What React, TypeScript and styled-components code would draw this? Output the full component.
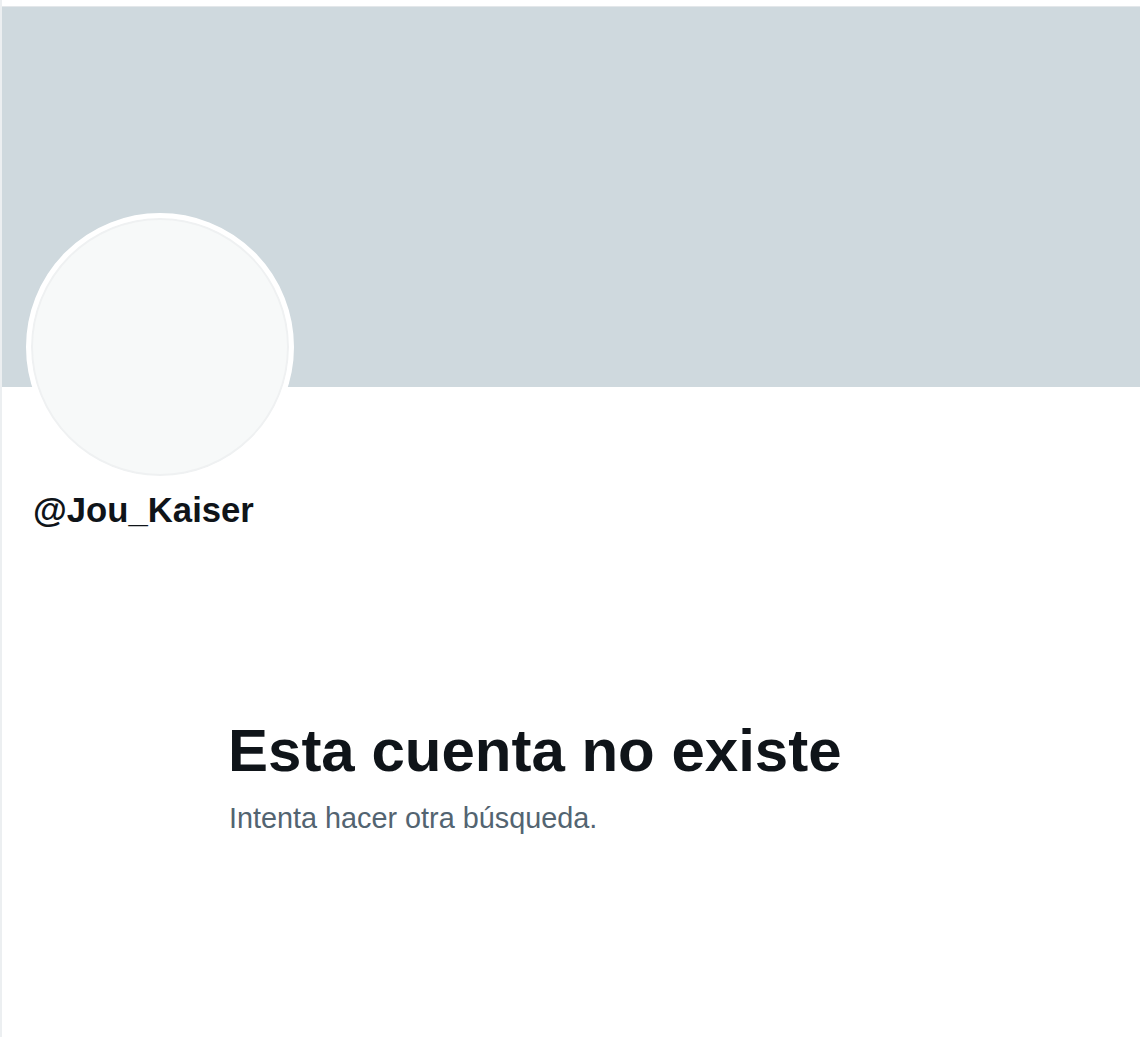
import React from 'react'
import styled, { createGlobalStyle } from 'styled-components'

const GlobalStyle = createGlobalStyle`
  html, body {
    margin: 0;
    padding: 0;
    background: #fff;
  }
  body {
    font-family: "Liberation Sans", Arial, sans-serif;
    color: #0f1419;
  }
`

const Page = styled.div`
  width: 1140px;
  height: 1037px;
  box-sizing: border-box;
  padding-top: 6px;
  border-left: 2px solid #eceff1;
  overflow: hidden;
`

const Banner = styled.div`
  height: 380px;
  background: #cfd9de;
  border-top: 1px solid #e3e7ea;
`

const Avatar = styled.div`
  width: 268px;
  height: 268px;
  box-sizing: border-box;
  margin: -174px 0 0 24px;
  border-radius: 50%;
  border: 5px solid #fff;
  background: #f7f9f9;
  box-shadow: inset 0 0 0 2px #eff1f2;
  position: relative;
`

const Handle = styled.div`
  margin: 9px 0 0 31px;
  font-size: 34.7px;
  line-height: 40px;
  font-weight: 700;
  color: #0f1419;
`

const EmptyState = styled.div`
  margin-top: 185px;
  padding-left: 226px;
  display: flex;
  flex-direction: column;
  gap: 13px;
`

const Title = styled.h1`
  margin: 0;
  font-size: 60px;
  line-height: 72px;
  font-weight: 700;
  color: #0f1419;
`

const Subtitle = styled.p`
  margin: 0;
  padding-left: 1px;
  font-size: 28.8px;
  line-height: 36px;
  color: #536471;
`

export default function App() {
  return (
    <>
      <GlobalStyle />
      <Page>
        <Banner />
        <Avatar />
        <Handle>@Jou_Kaiser</Handle>
        <EmptyState>
          <Title>Esta cuenta no existe</Title>
          <Subtitle>Intenta hacer otra búsqueda.</Subtitle>
        </EmptyState>
      </Page>
    </>
  )
}
